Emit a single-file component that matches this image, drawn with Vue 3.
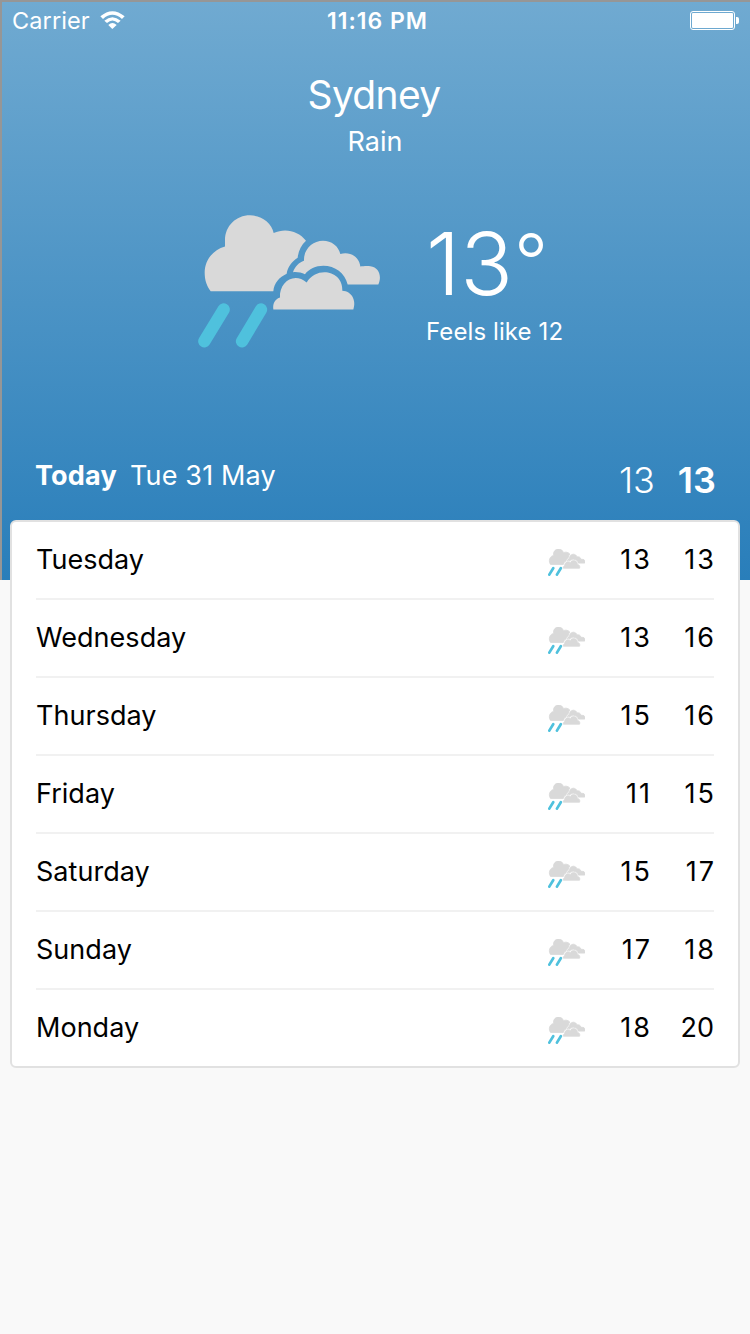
<script setup>
import { h } from 'vue'

const days = [
  { name: 'Tuesday', low: 13, high: 13 },
  { name: 'Wednesday', low: 13, high: 16 },
  { name: 'Thursday', low: 15, high: 16 },
  { name: 'Friday', low: 11, high: 15 },
  { name: 'Saturday', low: 15, high: 17 },
  { name: 'Sunday', low: 17, high: 18 },
  { name: 'Monday', low: 18, high: 20 },
]

// A leading "1" is narrow, so these values are spaced a little wider.
const isTeen = (value) => value < 20

const clouds = [
  'M62 272C50 258 44 238 44 217C44 180 68 148 105 138V120C105 77 138 45 180 45C214 45 245 67 251 98C286 82 325 92 348 121C333 135 325 152 323 172C305 184 293 200 290 220C268 230 252 248 250 272Z',
  'M309 215C315 198 327 186 342 181C340 148 367 121 399 121C424 121 446 137 451 161C478 152 508 168 511 198C520 196 535 196 541 197C568 200 576 228 565 252H473C465 218 435 196 400 196C377 196 357 206 345 221C334 216 322 214 309 215Z',
  'M250 327C248 310 253 297 270 291C267 245 312 213 350 246C380 195 460 210 457 271C485 272 500 300 490 327Z',
]

// `weight` thickens the clouds, which keeps them solid at small sizes.
const RainIcon = ({ weight = 0 }) =>
  h('svg', { viewBox: '24 44 546 398', preserveAspectRatio: 'none' }, [
    ...clouds.map((d) =>
      h('path', { d, fill: '#d9d9d9', stroke: '#d9d9d9', 'stroke-width': weight }),
    ),
    h('path', {
      d: 'M101 327L43 422M213 327L156 422',
      stroke: '#4fc1dd',
      'stroke-width': 37 + weight / 4,
      'stroke-linecap': 'round',
    }),
  ])
RainIcon.props = ['weight']
</script>

<template>
  <main class="screen">
    <header class="hero">
      <div class="status">
        <div class="carrier">
          <span>Carrier</span>
          <svg class="wifi" viewBox="0 0 75 54">
            <path d="M1 16Q37-15 74 16L66 24Q37-1 9 24Z" />
            <path d="M13 29Q37 8 62 29L54 36Q37 21 21 36Z" />
            <path d="M25 42Q37 30 50 42L37 54Z" />
          </svg>
        </div>
        <div class="time">11:16 PM</div>
        <svg class="battery" viewBox="0 0 49 19">
          <rect x=".5" y=".5" width="44" height="18" rx="2.5" fill="none" stroke="#fff" />
          <rect x="2" y="2" width="41" height="15" rx="1" fill="#fff" />
          <path d="M46 6h1q2 0 2 2v3q0 2-2 2h-1z" fill="#fff" />
        </svg>
      </div>
      <h1 class="city">Sydney</h1>
      <div class="condition">Rain</div>
      <section class="current">
        <RainIcon class="icon-large" />
        <div class="reading">
          <div class="temp">13<span class="degree">°</span></div>
          <div class="feels">Feels like 12</div>
        </div>
      </section>
      <section class="today">
        <strong class="today-label">Today</strong>
        <span class="date">Tue 31 May</span>
        <span class="today-low">13</span>
        <span class="today-high">13</span>
      </section>
    </header>
    <ul class="card">
      <li v-for="day in days" :key="day.name" class="row">
        <span class="day">{{ day.name }}</span>
        <RainIcon class="icon-small" :weight="12" />
        <span class="value"><span :class="{ teen: isTeen(day.low) }">{{ day.low }}</span></span>
        <span class="value"><span :class="{ teen: isTeen(day.high) }">{{ day.high }}</span></span>
      </li>
    </ul>
  </main>
</template>

<style>
body {
  background: #f9f9f9;
}
</style>

<style scoped>
.screen {
  width: 750px;
  height: 1334px;
  overflow: hidden;
  background: #f9f9f9;
  font-family: Inter, "Liberation Sans", sans-serif;
  white-space: nowrap;
}
.hero {
  box-sizing: border-box;
  height: 580px;
  border-top: 2px solid #969696;
  border-left: 2px solid #969696;
  background: linear-gradient(#70aad1, #297eba);
  color: #fff;
}
.status {
  display: grid;
  grid-template-columns: 1fr auto 1fr;
  align-items: center;
  height: 38px;
  padding: 0 11px 0 10px;
}
.carrier {
  display: flex;
  align-items: center;
  gap: 10px;
  height: 36px;
  margin-bottom: 2px;
  font-size: 23.5px;
  letter-spacing: 0.1px;
}
.wifi {
  width: 25px;
  height: 18px;
  fill: #fff;
}
.time {
  margin-left: 4px;
  font-size: 23px;
  font-weight: 600;
  letter-spacing: 1px;
}
.battery {
  width: 49px;
  height: 19px;
  margin-bottom: 1px;
  justify-self: end;
}
.city {
  margin: 30px 0 0;
  padding-right: 4px;
  height: 50px;
  line-height: 50px;
  font-size: 39px;
  font-weight: 400;
  letter-spacing: -0.7px;
  text-align: center;
}
.condition {
  margin-top: 4px;
  padding-right: 2px;
  height: 36px;
  line-height: 36px;
  font-size: 27px;
  text-align: center;
}
.current {
  display: flex;
  padding: 55px 0 0 196px;
  height: 134px;
}
.icon-large {
  width: 182px;
  height: 133px;
}
.reading {
  margin-left: 46px;
}
.temp {
  display: flex;
  height: 99px;
  line-height: 98px;
  font-size: 87px;
  font-weight: 300;
}
.degree {
  margin-left: 1px;
  line-height: 92px;
  font-size: 75px;
  font-weight: 300;
}
.feels {
  height: 34px;
  line-height: 36px;
  font-size: 24px;
  letter-spacing: 0.1px;
}
.today {
  display: flex;
  align-items: center;
  height: 40px;
  margin-top: 106px;
  padding: 0 34px 0 33px;
  font-size: 27px;
}
.today-label {
  font-weight: 700;
  letter-spacing: 0.2px;
}
.date {
  margin-left: 13px;
  letter-spacing: 0.15px;
}
.today-low,
.today-high {
  font-size: 36px;
  padding-top: 9px;
}
.today-low {
  margin-left: auto;
  font-weight: 300;
}
.today-high {
  margin-left: 23px;
  font-weight: 600;
}
.card {
  position: relative;
  box-sizing: border-box;
  height: 548px;
  margin: -60px 10px 0;
  padding: 0 24px;
  border: 2px solid #e1e1e1;
  border-radius: 6px;
  background: #fff;
  list-style: none;
}
.row {
  box-sizing: border-box;
  display: flex;
  align-items: center;
  height: 78px;
  padding-bottom: 2px;
  border-bottom: 2px solid #f1f1f1;
  font-size: 27px;
  color: #000;
}
.row:last-child {
  height: 76px;
  border-bottom: 0;
}
.day {
  letter-spacing: 0.03px;
}
.icon-small {
  width: 37px;
  height: 27px;
  margin: 7px 1px 0 auto;
}
.value {
  width: 64px;
  text-align: right;
}
.teen {
  margin-right: -2px;
  letter-spacing: 2px;
}
</style>
